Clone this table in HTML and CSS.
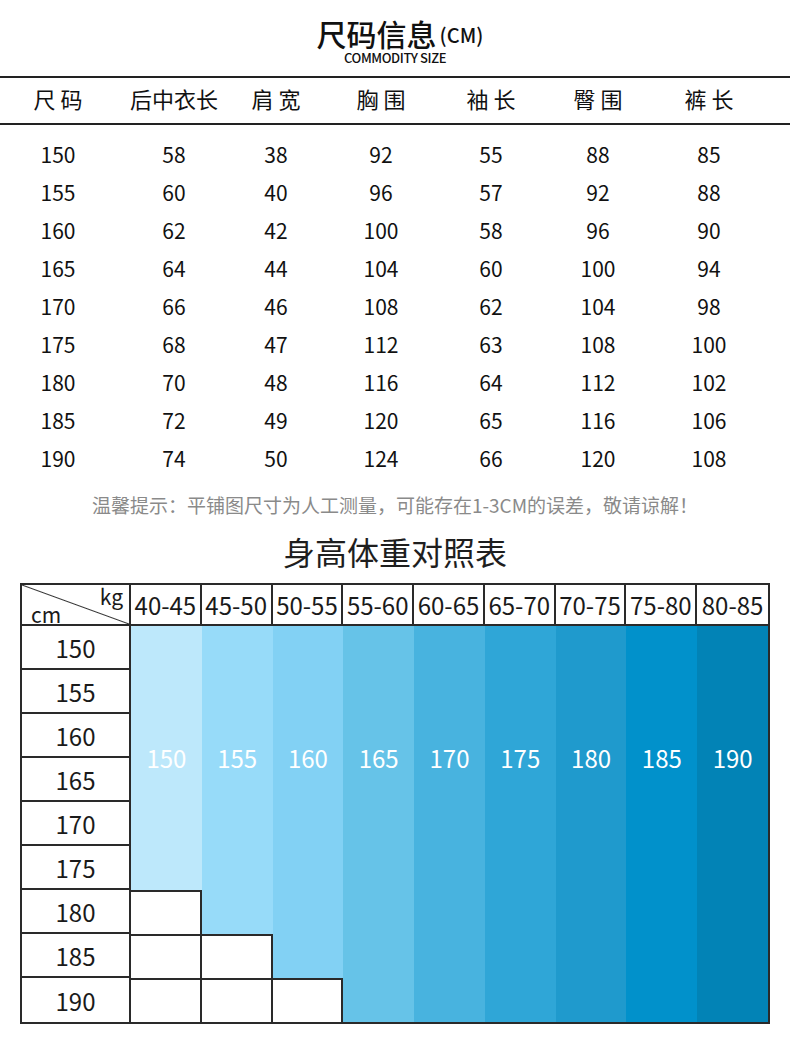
FILE: index.html
```html
<!DOCTYPE html>
<html lang="zh-CN">
<head>
<meta charset="utf-8">
<title>尺码信息</title>
<link rel="stylesheet" href="styles.css">
</head>
<body>
<div class="page">
  <header class="title">
    <div class="title-main">尺码信息<span class="unit">(CM)</span></div>
    <div class="title-sub">COMMODITY SIZE</div>
  </header>

  <div class="size-table">
    <div class="row head">
      <div class="cell"><span class="sp">尺码</span></div>
      <div class="cell">后中衣长</div>
      <div class="cell"><span class="sp">肩宽</span></div>
      <div class="cell"><span class="sp">胸围</span></div>
      <div class="cell"><span class="sp">袖长</span></div>
      <div class="cell"><span class="sp">臀围</span></div>
      <div class="cell"><span class="sp">裤长</span></div>
    </div>
    <div class="body">
      <div class="row"><div class="cell">150</div><div class="cell">58</div><div class="cell">38</div><div class="cell">92</div><div class="cell">55</div><div class="cell">88</div><div class="cell">85</div></div>
      <div class="row"><div class="cell">155</div><div class="cell">60</div><div class="cell">40</div><div class="cell">96</div><div class="cell">57</div><div class="cell">92</div><div class="cell">88</div></div>
      <div class="row"><div class="cell">160</div><div class="cell">62</div><div class="cell">42</div><div class="cell">100</div><div class="cell">58</div><div class="cell">96</div><div class="cell">90</div></div>
      <div class="row"><div class="cell">165</div><div class="cell">64</div><div class="cell">44</div><div class="cell">104</div><div class="cell">60</div><div class="cell">100</div><div class="cell">94</div></div>
      <div class="row"><div class="cell">170</div><div class="cell">66</div><div class="cell">46</div><div class="cell">108</div><div class="cell">62</div><div class="cell">104</div><div class="cell">98</div></div>
      <div class="row"><div class="cell">175</div><div class="cell">68</div><div class="cell">47</div><div class="cell">112</div><div class="cell">63</div><div class="cell">108</div><div class="cell">100</div></div>
      <div class="row"><div class="cell">180</div><div class="cell">70</div><div class="cell">48</div><div class="cell">116</div><div class="cell">64</div><div class="cell">112</div><div class="cell">102</div></div>
      <div class="row"><div class="cell">185</div><div class="cell">72</div><div class="cell">49</div><div class="cell">120</div><div class="cell">65</div><div class="cell">116</div><div class="cell">106</div></div>
      <div class="row"><div class="cell">190</div><div class="cell">74</div><div class="cell">50</div><div class="cell">124</div><div class="cell">66</div><div class="cell">120</div><div class="cell">108</div></div>
    </div>
  </div>

  <p class="note">温馨提示：平铺图尺寸为人工测量，可能存在1-3CM的误差，敬请谅解！</p>

  <h2 class="chart-title">身高体重对照表</h2>

  <div class="chart">
    <div class="corner"><span class="kg">kg</span><span class="cm">cm</span></div>
    <div class="hd">40-45</div>
    <div class="hd">45-50</div>
    <div class="hd">50-55</div>
    <div class="hd">55-60</div>
    <div class="hd">60-65</div>
    <div class="hd">65-70</div>
    <div class="hd">70-75</div>
    <div class="hd">75-80</div>
    <div class="hd last">80-85</div>

    <div class="ht">150</div>
    <div class="blue b1 s6"><div class="num">150</div></div>
    <div class="blue b2 s7"><div class="num">155</div></div>
    <div class="blue b3 s8"><div class="num">160</div></div>
    <div class="blue b4 s9"><div class="num">165</div></div>
    <div class="blue b5 s9"><div class="num">170</div></div>
    <div class="blue b6 s9"><div class="num">175</div></div>
    <div class="blue b7 s9"><div class="num">180</div></div>
    <div class="blue b8 s9"><div class="num">185</div></div>
    <div class="blue b9 s9"><div class="num">190</div></div>

    <div class="ht">155</div>
    <div class="ht">160</div>
    <div class="ht">165</div>
    <div class="ht">170</div>
    <div class="ht">175</div>
    <div class="ht">180</div>
    <div class="empty"></div>
    <div class="ht">185</div>
    <div class="empty"></div>
    <div class="empty"></div>
    <div class="ht last">190</div>
    <div class="empty"></div>
    <div class="empty"></div>
    <div class="empty"></div>
  </div>
</div>
</body>
</html>
```

FILE: styles.css
```css
html, body {
  margin: 0;
  padding: 0;
  background: #ffffff;
}

body {
  font-family: "Noto Sans CJK SC", "Noto Sans", sans-serif;
  color: #1a1a1a;
}

.page {
  width: 790px;
}

/* ---------- title ---------- */
.title {
  padding-top: 17px;
  text-align: center;
}

.title-main {
  font-size: 30px;
  line-height: 32px;
  height: 32px;
  font-weight: 500;
  color: #111;
  padding-left: 10px;
}

.unit {
  font-size: 20px;
  line-height: 20px;
  font-weight: 500;
  margin-left: 3px;
  vertical-align: 3px;
}

.title-sub {
  margin-top: 2px;
  font-size: 13px;
  line-height: 14px;
  font-weight: 500;
  letter-spacing: -0.4px;
  color: #111;
}

/* ---------- size table ---------- */
.size-table {
  margin-top: 11px;
}

.row {
  display: grid;
  grid-template-columns: 116px 116px 88px 122px 98px 116px 106px;
}

.cell {
  text-align: center;
  white-space: nowrap;
}

.head {
  border-top: 2px solid #222;
  border-bottom: 2px solid #222;
  height: 45px;
  box-sizing: content-box;
  font-size: 22px;
  line-height: 41px;
  color: #111;
}

.sp {
  letter-spacing: 5px;
  padding-left: 5px;
}

.body {
  padding-top: 10px;
}

.body .row {
  height: 38px;
  line-height: 38px;
  font-size: 21px;
  color: #111;
}

/* ---------- note ---------- */
.note {
  margin: 16px 0 0;
  text-align: center;
  font-size: 19px;
  line-height: 24px;
  color: #8a8a8a;
}

/* ---------- chart ---------- */
.chart-title {
  margin: 16px 0 0;
  text-align: center;
  font-size: 32px;
  line-height: 36px;
  font-weight: 400;
  color: #1e1e1e;
}

.chart {
  margin: 14px 0 0 20px;
  width: 750px;
  box-sizing: border-box;
  border: 2px solid #2a2a2a;
  display: grid;
  grid-template-columns: 109px repeat(9, 1fr);
  grid-template-rows: 41px repeat(9, 44px);
  color: #1a1a1a;
}

.corner {
  box-sizing: border-box;
  border-right: 2px solid #2a2a2a;
  border-bottom: 2px solid #2a2a2a;
  display: flex;
  flex-direction: column;
  font-size: 21px;
  line-height: 18px;
  background: linear-gradient(to top right, transparent calc(50% - 1px), #333 50%, transparent calc(50% + 1px));
}

.kg {
  align-self: flex-end;
  padding: 2px 6px 0 0;
}

.cm {
  align-self: flex-start;
  padding: 0 0 0 9px;
}

.hd {
  box-sizing: border-box;
  border-right: 2px solid #2a2a2a;
  border-bottom: 2px solid #2a2a2a;
  display: flex;
  align-items: center;
  justify-content: center;
  font-size: 24px;
  white-space: nowrap;
}

.hd.last {
  border-right: none;
}

.ht {
  box-sizing: border-box;
  border-right: 2px solid #2a2a2a;
  border-bottom: 2px solid #2a2a2a;
  display: flex;
  align-items: center;
  justify-content: center;
  font-size: 24px;
}

.ht.last {
  border-bottom: none;
}

.blue {
  display: flex;
  flex-direction: column;
}

.s6 { grid-row: span 6; }
.s7 { grid-row: span 7; }
.s8 { grid-row: span 8; }
.s9 { grid-row: span 9; }

.b1 { background: #bde8fb; }
.b2 { background: #97dbf9; }
.b3 { background: #82d1f4; }
.b4 { background: #66c3e8; }
.b5 { background: #48b3df; }
.b6 { background: #2fa6d7; }
.b7 { background: #1f9acd; }
.b8 { background: #0191cb; }
.b9 { background: #0283b6; }

.num {
  height: 262px;
  display: flex;
  align-items: center;
  justify-content: center;
  color: #ffffff;
  font-size: 24px;
}

.empty {
  box-sizing: border-box;
  border-top: 2px solid #2a2a2a;
  border-right: 2px solid #2a2a2a;
  background: #ffffff;
}
```
